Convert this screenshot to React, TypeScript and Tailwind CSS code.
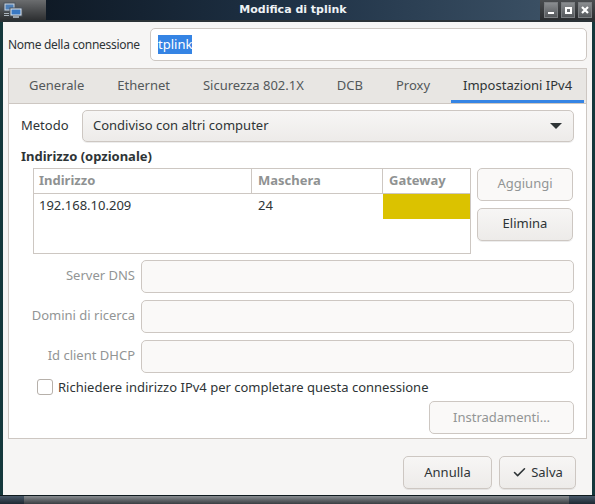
import { Check } from 'lucide-react';

const font = { fontFamily: '"Noto Sans", "Open Sans", sans-serif' };

function Btn({ children, disabled, className = '' }: { children: React.ReactNode; disabled?: boolean; className?: string }) {
  return (
    <div
      className={`flex shrink-0 items-center justify-center whitespace-nowrap rounded-[5px] border border-[#cdc7c2] text-[13px] ${
        disabled
          ? 'bg-[#faf9f8] text-[#929595]'
          : 'bg-gradient-to-b from-[#f7f6f5] to-[#edebe9] text-[#2e3436] shadow-[0_1px_0_rgba(0,0,0,0.07)]'
      } ${className}`}
    >
      {children}
    </div>
  );
}

function Field({ label, className = '' }: { label: string; className?: string }) {
  return (
    <div className={`flex items-center ${className}`}>
      <div className="w-[120px] shrink-0 whitespace-nowrap pr-[6px] text-right text-[13px] text-[#929595]">{label}</div>
      <div className="h-[33px] min-w-0 flex-1 rounded-[5px] border border-[#cdc7c2] bg-[#faf9f8]" />
    </div>
  );
}

export default function App() {
  const tabs = ['Generale', 'Ethernet', 'Sicurezza 802.1X', 'DCB', 'Proxy', 'Impostazioni IPv4'];

  return (
    <div className="flex h-[504px] w-[595px] flex-col overflow-hidden bg-[#1b2a30]" style={font}>
      {/* Title bar */}
      <div className="flex h-[22px] shrink-0 items-stretch border-b-2 border-[#2a3236] bg-[#23282c]">
        <div className="flex w-[46px] items-center bg-gradient-to-b from-[#6b6d6f] to-[#2e3032] pl-[3px]">
          <svg width="20" height="17" viewBox="0 0 20 17">
            <rect x="1" y="1" width="11" height="8" fill="#cfd6de" stroke="#4a5560" />
            <rect x="2.5" y="2.5" width="8" height="5" fill="#4d7fb8" />
            <rect x="7" y="6" width="12" height="8" fill="#dfe4ea" stroke="#4a5560" />
            <rect x="8.5" y="7.5" width="9" height="5" fill="#3a78c2" />
            <rect x="10" y="14" width="6" height="2" fill="#9aa3ac" />
            <rect x="1" y="11" width="5" height="1" fill="#aab3bc" />
            <rect x="1" y="13" width="5" height="1" fill="#aab3bc" />
          </svg>
        </div>
        <div className="flex flex-1 items-center justify-center bg-gradient-to-r from-[#0f1a26] via-[#1f3246] to-[#3a4f63]">
          <span
            className="whitespace-nowrap text-[11px] font-bold text-[#eef2f5]"
            style={{ fontFamily: '"DejaVu Sans", sans-serif' }}
          >
            Modifica di tplink
          </span>
        </div>
        <div className="flex items-center gap-[3px] bg-gradient-to-b from-[#4a4d50] to-[#2a2c2e] pl-[4px] pr-[3px]">
          {['min', 'max', 'close'].map((k) => (
            <div
              key={k}
              className="flex h-[16px] w-[14px] items-center justify-center border border-[#7b7e81] bg-gradient-to-b from-[#8a8d90] to-[#55585b]"
            >
              {k === 'min' && <div className="mt-[6px] h-[2px] w-[6px] bg-white" />}
              {k === 'max' && <div className="h-[7px] w-[7px] border-2 border-white" />}
              {k === 'close' && (
                <svg width="8" height="8" viewBox="0 0 8 8">
                  <path d="M1 1 L7 7 M7 1 L1 7" stroke="white" strokeWidth="2.2" />
                </svg>
              )}
            </div>
          ))}
        </div>
      </div>

      {/* Body */}
      <div className="flex min-h-0 flex-1 border-x-[3px] border-[#14383c]">
        <div className="flex min-w-0 flex-1 flex-col bg-[#f6f5f4] px-[5px] pt-[6px]">
          {/* Name row */}
          <div className="flex items-center">
            <div className="w-[142px] shrink-0 whitespace-nowrap text-[12px] tracking-[-0.3px] text-[#2e3436]">
              Nome della connessione
            </div>
            <div className="flex h-[33px] min-w-0 flex-1 items-center rounded-[5px] border border-[#cdc7c2] bg-white px-[7px]">
              <span className="bg-[#3584e4] text-[13px] text-white">tplink</span>
            </div>
          </div>

          {/* Notebook */}
          <div className="mt-[7px] flex h-[371px] flex-col overflow-hidden border border-[#cdc7c2] bg-white">
            <div className="flex h-[35px] shrink-0 items-stretch gap-[9px] whitespace-nowrap border-b border-[#cdc7c2] bg-[#e8e6e3] pl-[8px]">
              {tabs.map((t, i) => {
                const active = i === tabs.length - 1;
                return (
                  <div
                    key={t}
                    className={`flex items-center px-[12px] text-[13px] ${
                      active ? 'border-b-[3px] border-[#3584e4] pt-[3px] text-[#2e3436]' : 'text-[#53585a]'
                    }`}
                  >
                    {t}
                  </div>
                );
              })}
            </div>

            <div className="flex flex-col px-[12px] pt-[6px]">
              {/* Metodo */}
              <div className="flex items-center">
                <div className="w-[61px] shrink-0 text-[13px] text-[#2e3436]">Metodo</div>
                <div className="flex h-[32px] min-w-0 flex-1 items-center justify-between rounded-[5px] border border-[#cdc7c2] bg-gradient-to-b from-[#f7f6f5] to-[#edebe9] px-[10px] text-[13px] text-[#2e3436] shadow-[0_1px_0_rgba(0,0,0,0.07)]">
                  <span className="whitespace-nowrap">Condiviso con altri computer</span>
                  <svg width="12" height="8" viewBox="0 0 12 8" className="mr-[1px]">
                    <path d="M0 1 L12 1 L6 7 Z" fill="#2e3436" />
                  </svg>
                </div>
              </div>

              <div className="mt-[5px] text-[13px] font-bold text-[#2e3436]">Indirizzo (opzionale)</div>

              {/* Addresses */}
              <div className="mt-[1px] flex pl-[12px]">
                <div className="h-[86px] w-[438px] shrink-0 border border-[#cdc7c2] bg-white">
                  <div className="flex h-[25px] border-b border-[#cdc7c2] text-[13px] font-bold text-[#8f9292]">
                    <div className="flex w-[218px] items-center border-r border-[#cdc7c2] pl-[5px]">Indirizzo</div>
                    <div className="flex w-[131px] items-center border-r border-[#cdc7c2] pl-[6px]">Maschera</div>
                    <div className="flex flex-1 items-center pl-[6px]">Gateway</div>
                  </div>
                  <div className="flex h-[25px] text-[13px] text-[#2e3436]">
                    <div className="flex w-[218px] items-center pl-[5px]">192.168.10.209</div>
                    <div className="flex w-[131px] items-center pl-[6px]">24</div>
                    <div className="flex-1 bg-[#dbc200]" />
                  </div>
                </div>
                <div className="ml-[6px] flex flex-col gap-[7px]">
                  <Btn disabled className="h-[33px] w-[96px]">Aggiungi</Btn>
                  <Btn className="h-[33px] w-[96px]">Elimina</Btn>
                </div>
              </div>

              <Field label="Server DNS" className="mt-[6px]" />
              <Field label="Domini di ricerca" className="mt-[7px]" />
              <Field label="Id client DHCP" className="mt-[7px]" />

              <div className="mt-[5px] flex items-center pl-[16px]">
                <div className="h-[16px] w-[16px] shrink-0 rounded-[3px] border border-[#b6b0aa] bg-white" />
                <span className="ml-[5px] whitespace-nowrap text-[13px] text-[#2e3436]">
                  Richiedere indirizzo IPv4 per completare questa connessione
                </span>
              </div>

              <div className="mt-[4px] flex justify-end">
                <Btn disabled className="h-[33px] w-[145px]">Instradamenti…</Btn>
              </div>
            </div>
          </div>

          {/* Footer */}
          <div className="mt-[17px] flex justify-end gap-[7px] pr-[11px]">
            <Btn className="h-[33px] w-[89px]">Annulla</Btn>
            <Btn className="h-[33px] w-[77px] gap-[4px]">
              <Check size={15} strokeWidth={2.5} />
              Salva
            </Btn>
          </div>
        </div>
      </div>

      {/* Bottom frame */}
      <div className="flex h-[9px] shrink-0 border-t border-[#0e1a1e]">
        <div className="w-[24px] bg-gradient-to-b from-[#4a5a6a] to-[#1e2832]" />
        <div className="flex-1 bg-gradient-to-b from-[#8a8e92] to-[#3a3e42]" />
        <div className="w-[26px] bg-gradient-to-b from-[#4a5a6a] to-[#1e2832]" />
      </div>
    </div>
  );
}
